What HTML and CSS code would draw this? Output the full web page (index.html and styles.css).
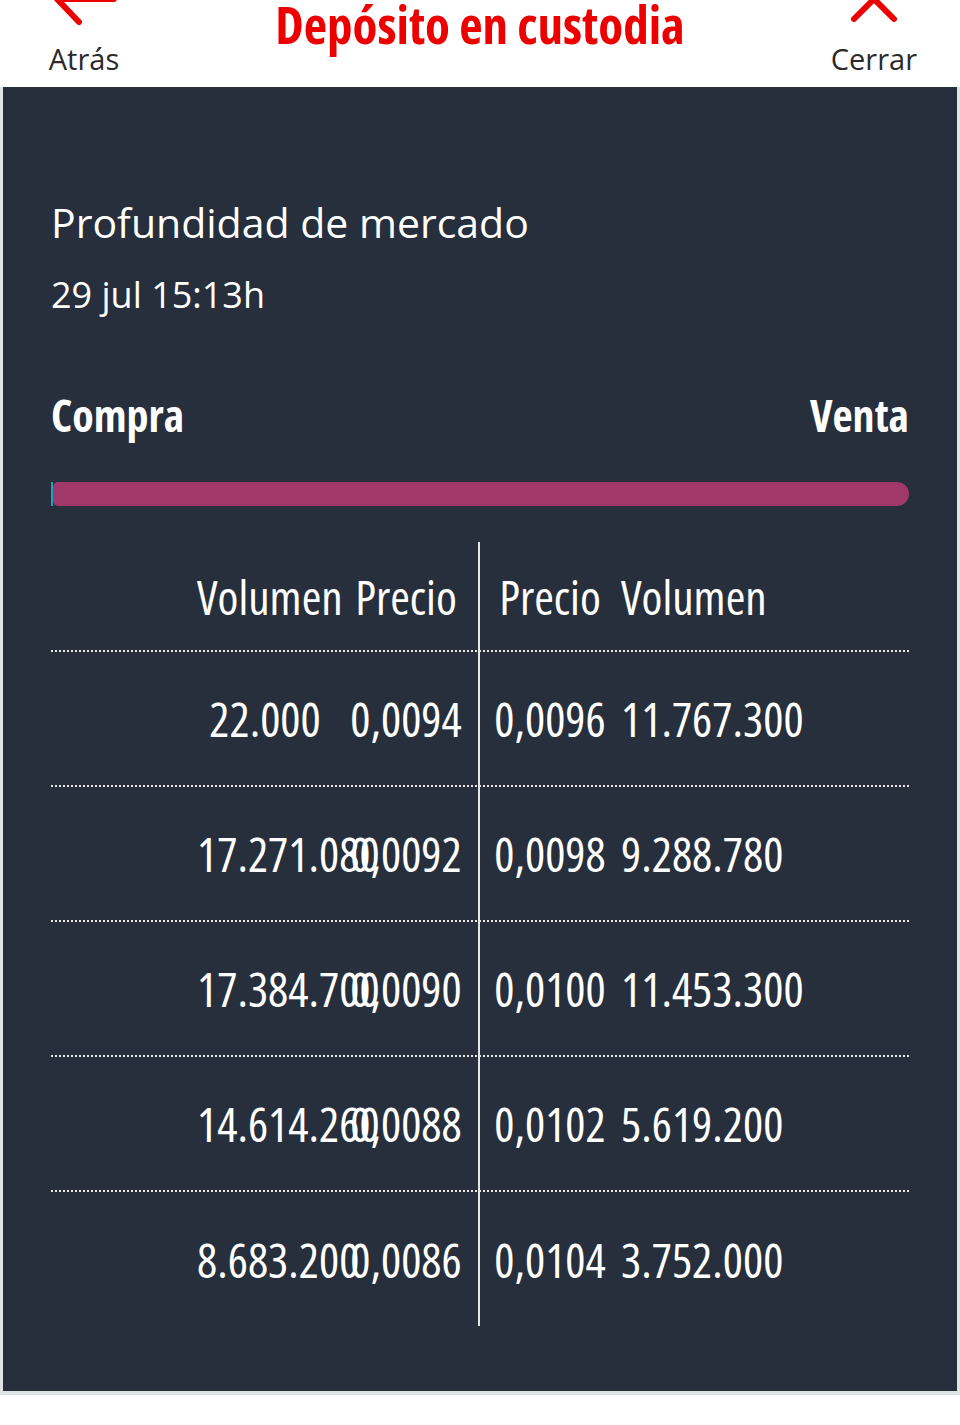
FILE: index.html
```html
<!DOCTYPE html>
<html>
<head>
    <meta charset="utf-8">
    <title>Depósito en custodia</title>
    <link rel="stylesheet" href="styles.css">
</head>
<body>
    <header class="top-bar">
        <div class="nav-btn back">
            <svg class="nav-icon" width="72" height="26" viewBox="0 0 72 26">
                <path d="M9 -1 L66 -1 M9 -1 L31 22" fill="none" stroke="#ec0000" stroke-width="6" stroke-linecap="round" stroke-linejoin="round"/>
            </svg>
            <span class="nav-label">Atrás</span>
        </div>
        <h1 class="page-title">Depósito en custodia</h1>
        <div class="nav-btn close">
            <svg class="nav-icon" width="50" height="26" viewBox="0 0 50 26">
                <path d="M5 19 L45 -21 M45 19 L5 -21" fill="none" stroke="#ec0000" stroke-width="6" stroke-linecap="round"/>
            </svg>
            <span class="nav-label">Cerrar</span>
        </div>
    </header>

    <div class="frame">
        <section class="panel">
            <h2 class="panel-title">Profundidad de mercado</h2>
            <div class="panel-date">29 jul 15:13h</div>

            <div class="sides">
                <span>Compra</span>
                <span>Venta</span>
            </div>

            <div class="balance-bar">
                <div class="bar-buy"></div>
                <div class="bar-sell"></div>
            </div>

            <div class="book">
                <div class="book-row head">
                    <span></span>
                    <span class="cell">Volumen</span>
                    <span class="cell">Precio</span>
                    <span class="cell">Precio</span>
                    <span class="cell">Volumen</span>
                </div>
                <div class="book-row">
                    <span></span>
                    <span class="cell">22.000</span>
                    <span class="cell">0,0094</span>
                    <span class="cell">0,0096</span>
                    <span class="cell">11.767.300</span>
                </div>
                <div class="book-row">
                    <span></span>
                    <span class="cell">17.271.080</span>
                    <span class="cell">0,0092</span>
                    <span class="cell">0,0098</span>
                    <span class="cell">9.288.780</span>
                </div>
                <div class="book-row">
                    <span></span>
                    <span class="cell">17.384.700</span>
                    <span class="cell">0,0090</span>
                    <span class="cell">0,0100</span>
                    <span class="cell">11.453.300</span>
                </div>
                <div class="book-row">
                    <span></span>
                    <span class="cell">14.614.260</span>
                    <span class="cell">0,0088</span>
                    <span class="cell">0,0102</span>
                    <span class="cell">5.619.200</span>
                </div>
                <div class="book-row">
                    <span></span>
                    <span class="cell">8.683.200</span>
                    <span class="cell">0,0086</span>
                    <span class="cell">0,0104</span>
                    <span class="cell">3.752.000</span>
                </div>
            </div>
        </section>
    </div>
</body>
</html>
```

FILE: styles.css
```css
html, body {
    margin: 0;
    padding: 0;
    background: #fff;
}
body {
    font-family: 'Open Sans', 'Noto Sans', sans-serif;
}
.top-bar {
    height: 87px;
    display: grid;
    grid-template-columns: 1fr auto 1fr;
    align-items: start;
    background: #fff;
}
.nav-btn {
    display: flex;
    flex-direction: column;
    align-items: center;
}
.back {
    justify-self: start;
    padding-left: 48px;
}
.close {
    justify-self: end;
    padding-right: 43px;
}
.nav-icon {
    display: block;
}
.nav-label {
    margin-top: 16px;
    font-size: 29px;
    line-height: 34px;
    color: #2a2a2a;
}
.page-title {
    margin: 0;
    font-stretch: 75%;
    font-weight: bold;
    font-size: 51px;
    line-height: 48px;
    color: #ec0000;
    white-space: nowrap;
}
.frame {
    background: #dde3e7;
    padding: 0 3px 4px 3px;
}
.panel {
    background: #262f3b;
    color: #fff;
    padding: 110px 48px 65px 48px;
}
.panel-title {
    margin: 0;
    font-weight: normal;
    font-size: 41px;
    line-height: 50px;
}
.panel-date {
    margin-top: 25px;
    font-size: 36px;
    line-height: 46px;
}
.sides {
    margin-top: 73px;
    display: flex;
    justify-content: space-between;
    font-stretch: 75%;
    font-weight: bold;
    font-size: 44px;
    line-height: 48px;
}
.balance-bar {
    margin-top: 43px;
    height: 24px;
    display: flex;
}
.bar-buy {
    width: 2px;
    background: #17a6b8;
}
.bar-sell {
    flex: 1;
    background: #a0386a;
    border-radius: 5px 12px 12px 5px;
}
.book {
    margin-top: 36px;
    position: relative;
    font-stretch: 75%;
    font-size: 47.5px;
}
.book::after {
    content: '';
    position: absolute;
    top: 0;
    bottom: 0;
    left: 427px;
    width: 2px;
    background: #e4e7ea;
}
.book-row {
    display: grid;
    grid-template-columns: 146px 136px 146px 142px 136px;
    align-items: center;
    height: 133px;
    border-bottom: 2px dotted #e8e8e8;
}
.book-row.head {
    height: 108px;
}
.book-row:last-child {
    border-bottom: none;
    height: 134px;
}
.cell {
    text-align: center;
    white-space: nowrap;
}
```
